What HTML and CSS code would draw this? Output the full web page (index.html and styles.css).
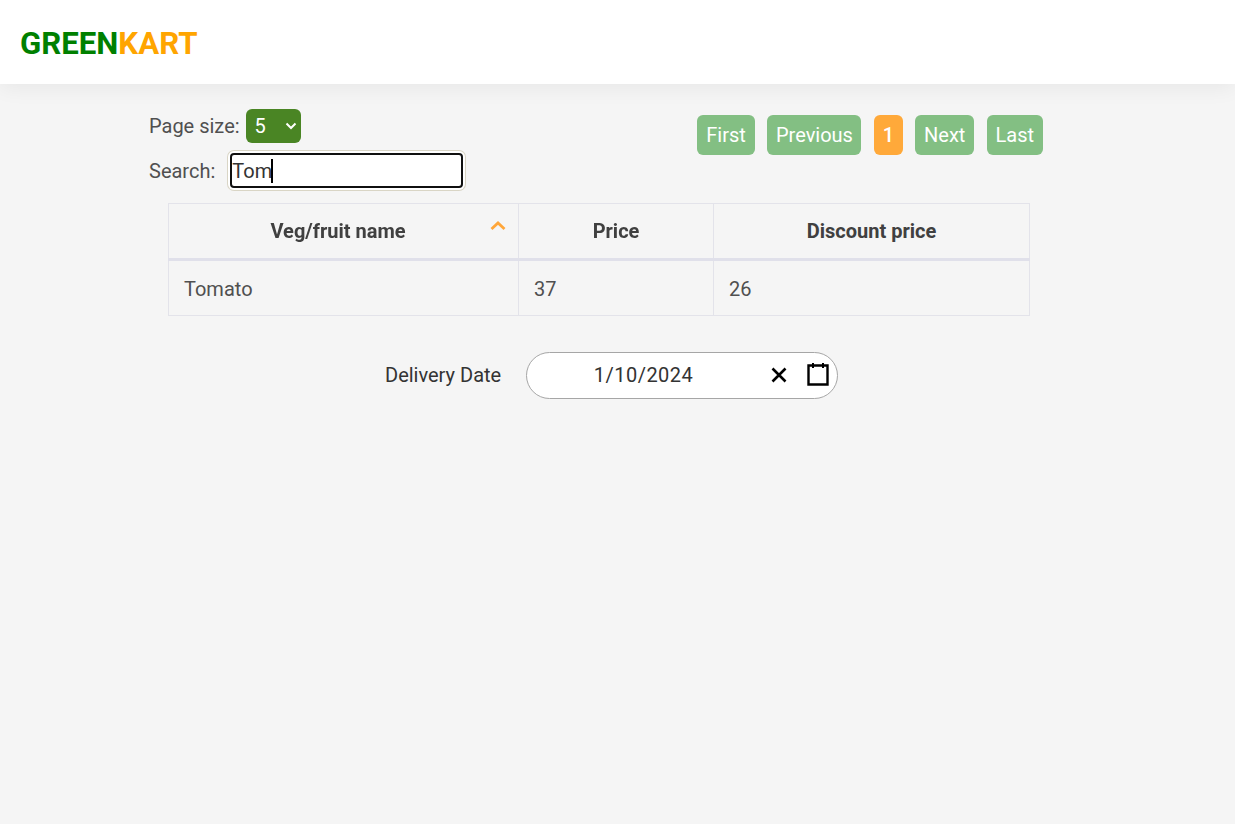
FILE: index.html
```html
<!DOCTYPE html>
<html lang="en">
<head>
  <meta charset="UTF-8">
  <title>GreenKart</title>
  <link rel="stylesheet" href="styles.css">
</head>
<body>

  <!-- Header -->
  <header class="top-bar">
    <div class="brand"><span class="brand-green">GREEN</span><span class="brand-orange">KART</span></div>
  </header>

  <div class="content">
    <!-- Filtros y paginacion -->
    <div class="controls">
      <div class="filters">
        <div class="filter-row">
          <label class="page-size-label" for="pageSize">Page size:</label>
          <div class="select-wrap">
            <select id="pageSize" class="page-size">
              <option>5</option>
              <option>10</option>
              <option>20</option>
            </select>
            <svg class="select-arrow" width="12" height="8" viewBox="0 0 12 8"><path d="M1.5 1.5 L6 6 L10.5 1.5" fill="none" stroke="#fff" stroke-width="2"/></svg>
          </div>
        </div>
        <div class="filter-row search-row">
          <label class="search-label" for="search">Search:</label>
          <div class="search-wrap">
            <input id="search" class="search" type="text" value="Tom" autofocus>
            <span class="caret"></span>
          </div>
        </div>
      </div>
      <ul class="pagination">
        <li><a class="page-btn btn-first">First</a></li>
        <li><a class="page-btn btn-prev">Previous</a></li>
        <li><a class="page-btn btn-num current">1</a></li>
        <li><a class="page-btn btn-next">Next</a></li>
        <li><a class="page-btn btn-last">Last</a></li>
      </ul>
    </div>

    <!-- Tabla -->
    <table class="products">
      <thead>
        <tr>
          <th class="col-name">Veg/fruit name
            <svg class="sort-icon" width="16" height="10" viewBox="0 0 16 10"><path d="M1.5 8 L8 2 L14.5 8" fill="none" stroke="#ffa63a" stroke-width="2.8"/></svg>
          </th>
          <th class="col-price">Price</th>
          <th class="col-discount">Discount price</th>
        </tr>
      </thead>
      <tbody>
        <tr>
          <td>Tomato</td>
          <td>37</td>
          <td>26</td>
        </tr>
      </tbody>
    </table>

    <!-- Fecha -->
    <div class="delivery">
      <span class="delivery-label">Delivery Date</span>
      <div class="date-picker">
        <span class="date-value">1/10/2024</span>
        <svg class="date-clear" width="18" height="18" viewBox="0 0 18 18"><path d="M2.5 2.5 L15.5 15.5 M15.5 2.5 L2.5 15.5" stroke="#000" stroke-width="2.6" fill="none"/></svg>
        <svg class="date-calendar" width="22" height="24" viewBox="0 0 22 24"><path d="M1.5 2.5 H20.5 V21.5 H1.5 Z" fill="none" stroke="#000" stroke-width="2.4"/><path d="M6 0 V5 M16 0 V5" stroke="#000" stroke-width="2"/></svg>
      </div>
    </div>
  </div>

</body>
</html>
```

FILE: styles.css
```css
* {
  box-sizing: border-box;
}
body {
  margin: 0;
  min-height: 824px;
  background: #f5f5f5;
  font-family: Roboto, sans-serif;
  font-size: 20px;
  color: #505050;
}
.top-bar {
  height: 84px;
  padding: 2px 0 0 20px;
  display: flex;
  align-items: center;
  background: #fff;
  box-shadow: 0 4px 20px rgba(0, 0, 0, 0.06);
}
.brand {
  font-size: 31.2px;
  font-weight: 700;
}
.brand-green {
  color: green;
}
.brand-orange {
  color: orange;
}
.content {
  width: 894px;
  margin-left: 149px;
}
.controls {
  display: flex;
  justify-content: space-between;
  padding-top: 25px;
  height: 119px;
}
.filter-row {
  display: flex;
  align-items: center;
}
.search-row {
  margin-top: 10px;
}
.page-size-label {
  margin-right: 6px;
}
.select-wrap {
  position: relative;
}
.page-size {
  display: block;
  width: 55px;
  height: 34px;
  padding-left: 9px;
  border: none;
  border-radius: 6px;
  background: #4a8524;
  color: #fff;
  font-family: Roboto, sans-serif;
  font-size: 20px;
  appearance: none;
}
.select-arrow {
  position: absolute;
  right: 4px;
  top: 13px;
  pointer-events: none;
}
.search-label {
  margin-right: 15px;
}
.search-wrap {
  position: relative;
}
.search {
  display: block;
  width: 233px;
  height: 35px;
  padding: 1px 2px 0;
  border: none;
  border-radius: 4px;
  background: #fff;
  color: #333;
  font-family: Roboto, sans-serif;
  font-size: 20px;
  caret-color: transparent;
}
.search:focus {
  outline: 2px solid #101010;
  outline-offset: -2px;
  box-shadow: 0 0 0 2px #fff, 0 0 0 3px #d9d5c5;
}
.caret {
  position: absolute;
  left: 41px;
  top: 6px;
  width: 2px;
  height: 24px;
  background: #000;
}
.pagination {
  display: flex;
  gap: 12.4px;
  margin: 6px 0 0;
  padding: 0;
  list-style: none;
}
.page-btn {
  display: block;
  height: 40px;
  border-radius: 6px;
  background: #83bf83;
  color: #fff;
  line-height: 40px;
  text-align: center;
}
.btn-first {
  width: 58px;
}
.btn-prev {
  width: 94px;
}
.btn-num {
  width: 29px;
}
.btn-next {
  width: 59px;
}
.btn-last {
  width: 56.4px;
}
.page-btn.current {
  background: #ffa93a;
  font-weight: 500;
}
.products {
  width: 862px;
  margin-left: 19px;
  border-collapse: collapse;
  table-layout: fixed;
}
.products th, .products td {
  border: 1px solid #e3e3ea;
}
.products th {
  height: 56px;
  position: relative;
  border-bottom: 3px solid #e0e0ea;
  color: #404040;
  font-weight: 700;
}
.products td {
  height: 56px;
  padding: 1px 0 0 15px;
}
.col-name {
  width: 350px;
  padding-right: 12px;
}
.col-price {
  width: 195px;
}
.sort-icon {
  position: absolute;
  right: 12px;
  top: 17px;
}
.delivery {
  display: flex;
  align-items: center;
  margin: 36px 0 0 236px;
}
.delivery-label {
  width: 141px;
  padding-bottom: 2px;
  color: #333;
}
.date-picker {
  display: flex;
  align-items: center;
  width: 312px;
  height: 47px;
  padding-bottom: 2px;
  border: 1px solid #a6a6a6;
  border-radius: 24px;
  background: #fff;
  color: #333;
}
.date-value {
  width: 233px;
  text-align: center;
  letter-spacing: 0.5px;
}
.date-clear {
  margin-left: 10px;
}
.date-calendar {
  margin-left: 19px;
}
```
